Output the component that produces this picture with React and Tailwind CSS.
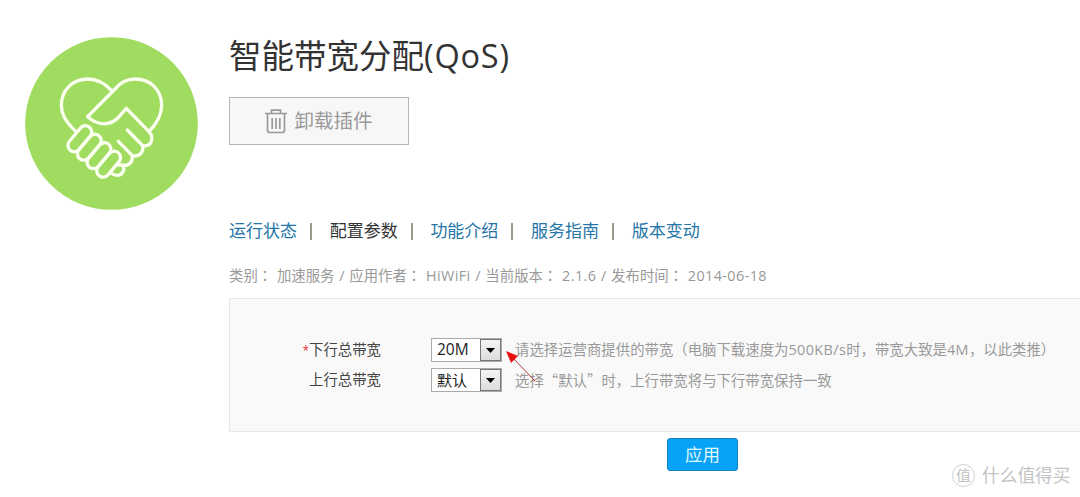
import clsx from "clsx";

const tabs = ["运行状态", "配置参数", "功能介绍", "服务指南", "版本变动"];

const HandshakeLogo = () => (
    <svg viewBox="0 0 519 519" className="size-[173px] shrink-0">
        <circle cx="259.5" cy="259.5" r="259" fill="#9fdc5f" />
        <g
            transform="translate(-30 -21)"
            fill="none"
            stroke="#fbfff0"
            strokeWidth="10"
            strokeLinecap="round"
            strokeLinejoin="round"
        >
            <path d="M180 302C150 272 139 252 139 226C139 180 174 147 218 147C247 147 268 158 290 182" />
            <path d="M218 260L300 177C317 156 334 147 361 147C406 147 440 180 440 226C440 257 427 279 402 305" />
            <path d="M218 260C246 288 288 289 312 260L334 235L402 305C420 326 408 351 383 347" />
            <path d="M337 300L383 347C387 367 372 382 352 377" />
            <path d="M310 334L352 377C354 396 342 409 322 406" />
            <path d="M308 405H322C333 420 320 440 300 435L286 429" />
            <rect x="-19" y="-45" width="38" height="90" rx="19" transform="translate(194.5 326) rotate(40)" />
            <rect x="-19" y="-45" width="38" height="90" rx="19" transform="translate(223 351.5) rotate(40)" />
            <rect x="-19" y="-45" width="38" height="90" rx="19" transform="translate(252 377) rotate(40)" />
            <rect x="-19" y="-45" width="38" height="90" rx="19" transform="translate(281 402.5) rotate(40)" />
        </g>
    </svg>
);

const TrashIcon = () => (
    <svg viewBox="0 0 22 25" className="h-[25px] w-[22px]" fill="none" stroke="#999" strokeWidth="1.7">
        <path d="M0 4.5H22M6.5 4V1.2H15.5V4M2.5 5V21Q2.5 23.5 5 23.5H17Q19.5 23.5 19.5 21V5" />
        <path d="M7.2 9V20M11 9V20M14.8 9V20" />
    </svg>
);

const Select = ({ value, className }) => (
    <div className="flex h-6 w-[71px] items-center border border-[#aaa] bg-white">
        <span className={clsx("flex-1 pl-[5px] leading-none text-[#222]", className)}>{value}</span>
        <span className="flex h-[22px] w-[21px] items-center justify-center border border-[#777] bg-linear-to-b from-[#f4f4f4] to-[#ddd]">
            <svg viewBox="0 0 9 5" className="h-[5px] w-[9px]">
                <path d="M0 0H9L4.5 5Z" fill="#000" />
            </svg>
        </span>
    </div>
);

const Field = ({ label, required, value, valueClass, children }) => (
    <div className="flex h-[30px] items-center">
        <div className="w-[151px] text-right text-[#444]">
            {required && <span className="text-[12px] text-[#e33]">*</span>}
            {label}
        </div>
        <div className="ml-[50px]">
            <Select value={value} className={valueClass} />
        </div>
        <div className="ml-[13px] whitespace-nowrap text-[#999]">{children}</div>
    </div>
);

const Colon = () => <span className="font-['Noto_Sans_CJK_TC']">：</span>;
const Wide = ({ children }) => <span className="tracking-[0.4px]">{children}</span>;
const Quote = ({ children }) => <span className="font-['Noto_Sans_CJK_SC']">{children}</span>;

const App = () => {
    return (
        <div className="relative flex h-[497px] w-[1080px] overflow-hidden bg-white pl-[25px] font-['Open_Sans','Noto_Sans_CJK_SC',sans-serif] text-[14.4px]">
            <div className="pt-[37px]">
                <HandshakeLogo />
            </div>

            <div className="ml-[31px] flex flex-1 flex-col">
                <h1 className="mt-[32px] h-12 whitespace-nowrap text-[32.5px] leading-[48px] text-[#333]">
                    智能带宽分配<span className="tracking-[0.8px]">(QoS)</span>
                </h1>
                <button className="mt-[17px] flex h-12 w-[180px] items-center justify-center gap-[7px] border border-[#b5b5b5] bg-[#f7f7f7] text-[19.5px] text-[#999]">
                    <TrashIcon />
                    卸载插件
                </button>

                <nav className="mt-[74px] flex h-6 items-center text-[17px]">
                    {tabs.map((tab, i) => (
                        <div key={tab} className="flex w-[100.7px] shrink-0 items-center">
                            <a className={i === 1 ? "text-[#333]" : "text-[#2476a8]"}>{tab}</a>
                            {i < tabs.length - 1 && <span className="ml-[13px] h-[17px] w-[2px] bg-[#9c988c]" />}
                        </div>
                    ))}
                </nav>

                <p className="mt-[20px] h-6 whitespace-nowrap leading-6 text-[#999] [word-spacing:1px]">
                    类别
                    <Colon /> 加速服务 / 应用作者
                    <Colon /> <Wide>HiWiFi</Wide> / 当前版本
                    <Colon /> <Wide>2.1.6</Wide> / 发布时间
                    <Colon /> <Wide>2014-06-18</Wide>
                </p>

                <div className="mt-[11px] h-[134px] border border-r-0 border-[#e8e8e8] bg-[#f9f9f9] pt-[36px]">
                    <Field label="下行总带宽" required value="20M" valueClass="text-[15.5px]">
                        请选择运营商提供的带宽（电脑下载速度为<Wide>500KB/s</Wide>时，带宽大致是<Wide>4M</Wide>，以此类推）
                    </Field>
                    <Field label="上行总带宽" value="默认" valueClass="text-[15px]">
                        选择<Quote>“</Quote>默认<Quote>”</Quote>时，上行带宽将与下行带宽保持一致
                    </Field>
                </div>

                <button className="mt-[6px] ml-[438px] flex h-[33px] w-[71px] items-center justify-center rounded-[3px] border border-[#1383bd] bg-[#08a3f7] text-[17.5px] text-[#e0f7ff]">
                    应用
                </button>
            </div>

            {/* pointer over the first select */}
            <svg viewBox="0 0 32 32" className="absolute top-[350px] left-[505px] size-8">
                <path d="M6 6L30 31" stroke="#b33" strokeWidth="1" />
                <path d="M1 1L13 6L6 13Z" fill="#e81010" />
            </svg>

            <div className="absolute top-[463px] left-[952px] flex items-center gap-[7px] text-[#c4c4c4]">
                <span className="flex size-[23px] items-center justify-center rounded-full border border-[#d0d0d0] text-[15px]">
                    值
                </span>
                <span className="text-[17.7px] leading-6">什么值得买</span>
            </div>
        </div>
    );
};

export default App;
